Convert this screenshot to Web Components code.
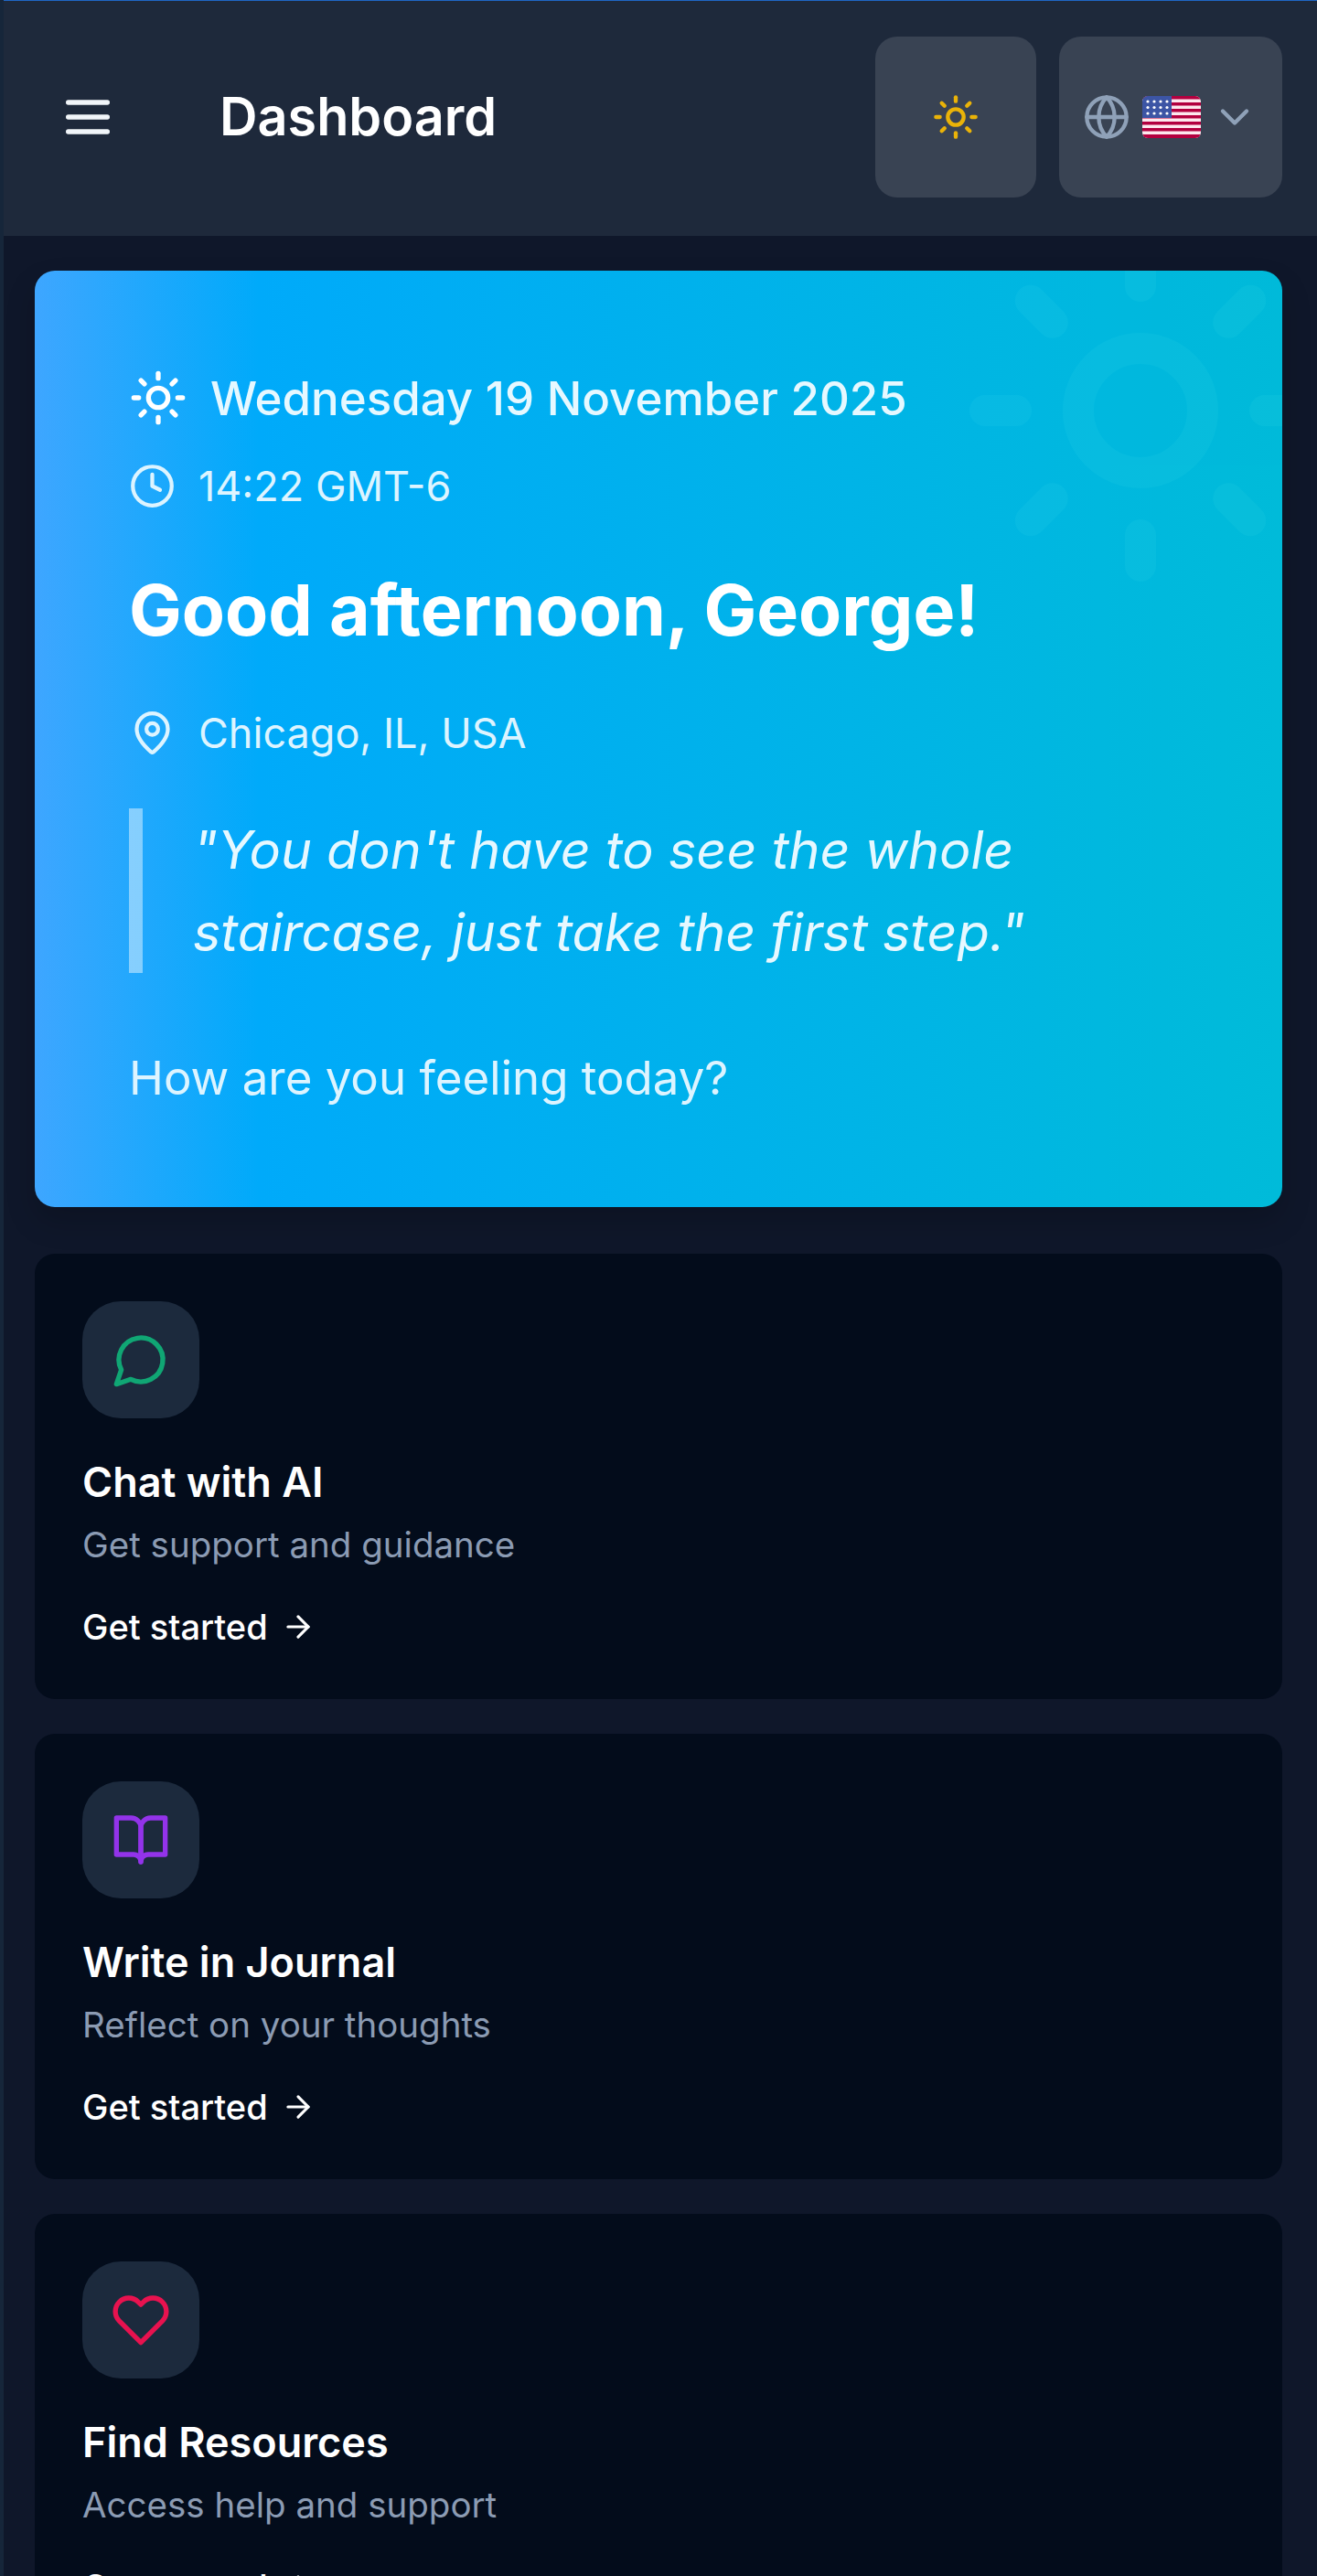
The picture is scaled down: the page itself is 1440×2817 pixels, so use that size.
<!DOCTYPE html>
<html lang="en">
<head>
<meta charset="utf-8">
<title>Dashboard</title>
<style>
  html, body { margin: 0; padding: 0; background: #0f172a; }
  body { font-family: Inter, "Liberation Sans", sans-serif; color: #fff; height: 2817px; overflow: hidden; }
</style>
</head>
<body>
<app-shell>
  <top-bar title="Dashboard"></top-bar>
  <hero-card></hero-card>
  <action-card heading="Chat with AI" text="Get support and guidance" icon="chat"></action-card>
  <action-card heading="Write in Journal" text="Reflect on your thoughts" icon="book"></action-card>
  <action-card heading="Find Resources" text="Access help and support" icon="heart"></action-card>
</app-shell>

<script>
// icons, all on a 24 box
const ICONS = {
  chat: '<path d="M7.9 20A9 9 0 1 0 4 16.1L2 22Z"/>',
  book: '<path d="M2 3h6a4 4 0 0 1 4 4v14a3 3 0 0 0-3-3H2z"/><path d="M22 3h-6a4 4 0 0 0-4 4v14a3 3 0 0 1 3-3h7z"/>',
  heart: '<path d="M20.84 4.61a5.5 5.5 0 0 0-7.78 0L12 5.67l-1.06-1.06a5.5 5.5 0 0 0-7.78 7.78l1.06 1.06L12 21.23l7.78-7.78 1.06-1.06a5.5 5.5 0 0 0 0-7.78z"/>',
  sun: '<circle cx="12" cy="12" r="4"/><path d="M12 2v2"/><path d="M12 20v2"/><path d="m4.93 4.93 1.41 1.41"/><path d="m17.66 17.66 1.41 1.41"/><path d="M2 12h2"/><path d="M20 12h2"/><path d="m6.34 17.66-1.41 1.41"/><path d="m19.07 4.93-1.41 1.41"/>',
  clock: '<circle cx="12" cy="12" r="10"/><path d="M12 6v6l4 2"/>',
  pin: '<path d="M20 10c0 4.99-5.54 10.19-7.4 11.8a1 1 0 0 1-1.2 0C9.54 20.19 4 14.99 4 10a8 8 0 0 1 16 0"/><circle cx="12" cy="10" r="3"/>',
  globe: '<circle cx="12" cy="12" r="10"/><path d="M12 2a14.5 14.5 0 0 0 0 20 14.5 14.5 0 0 0 0-20"/><path d="M2 12h20"/>',
  chevron: '<path d="m6 9 6 6 6-6"/>',
  arrow: '<path d="M5 12h14"/><path d="m12 5 7 7-7 7"/>',
  menu: '<path d="M4 6h16"/><path d="M4 12h16"/><path d="M4 18h16"/>'
};

function svg(name, size, color, sw) {
  return `<svg width="${size}" height="${size}" viewBox="0 0 24 24" fill="none" stroke="${color}" stroke-width="${sw || 2}" stroke-linecap="round" stroke-linejoin="round">${ICONS[name]}</svg>`;
}

class AppShell extends HTMLElement {
  constructor() {
    super();
    this.attachShadow({ mode: "open" }).innerHTML = `
      <style>
        :host { display: block; box-sizing: border-box; height: 2817px; overflow: hidden; border-left: 4px solid #16263a; }
        .body { display: flex; flex-direction: column; padding: 38px 38px 0 34px; }
      </style>
      <slot name="bar"></slot>
      <div class="body"><slot></slot></div>`;
  }
}

class TopBar extends HTMLElement {
  constructor() {
    super();
    this.slot = "bar";
    this.attachShadow({ mode: "open" }).innerHTML = `
      <style>
        :host { display: flex; align-items: center; box-sizing: border-box; height: 258px; background: #1e293b; border-top: 1px solid #1f66c4; padding: 0 38px 4px 60px; }
        .menu { display: flex; margin-right: 112px; }
        h1 { margin: 0; font-size: 57.5px; font-weight: 600; line-height: 1; flex: 1; }
        .btn { box-sizing: border-box; display: flex; align-items: center; height: 176px; background: #394353; border-radius: 24px; }
        .theme { width: 176px; justify-content: center; margin-right: 25px; }
        .lang { width: 244px; padding-left: 26px; }
        .flag { margin: 0 11px 0 13px; display: block; }
      </style>
      <div class="menu">${svg("menu", 64, "#f1f5f9", 2)}</div>
      <h1>${this.getAttribute("title")}</h1>
      <div class="btn theme">${svg("sun", 52, "#eab308", 2)}</div>
      <div class="btn lang">
        ${svg("globe", 52, "#8fa1b8", 2)}
        <svg class="flag" width="64" height="46" viewBox="0 0 64 46">
          <defs><clipPath id="f"><rect width="64" height="46" rx="6"/></clipPath></defs>
          <g clip-path="url(#f)">
            <rect width="64" height="46" fill="#fde8ee"/>
            <path fill="#b3003f" d="M0 0h64v3.5H0zM0 7h64v3.5H0zM0 14h64v3.5H0zM0 21h64v3.5H0zM0 28h64v3.5H0zM0 35h64v3.5H0zM0 42h64v4H0z"/>
            <rect width="32" height="24" fill="#3c55a5"/>
            <g fill="#fff">
              <circle cx="6" cy="6" r="1.6"/><circle cx="13" cy="6" r="1.6"/><circle cx="20" cy="6" r="1.6"/><circle cx="27" cy="6" r="1.6"/>
              <circle cx="6" cy="12.5" r="1.6"/><circle cx="13" cy="12.5" r="1.6"/><circle cx="20" cy="12.5" r="1.6"/><circle cx="27" cy="12.5" r="1.6"/>
              <circle cx="6" cy="19" r="1.6"/><circle cx="13" cy="19" r="1.6"/><circle cx="20" cy="19" r="1.6"/><circle cx="27" cy="19" r="1.6"/>
            </g>
          </g>
        </svg>
        ${svg("chevron", 52, "#8fa1b8", 2)}
      </div>`;
  }
}

class HeroCard extends HTMLElement {
  constructor() {
    super();
    this.attachShadow({ mode: "open" }).innerHTML = `
      <style>
        :host { display: block; position: relative; box-sizing: border-box; height: 1024px; margin-bottom: 51px; padding: 109px 104px 0 103px; border-radius: 22px; overflow: hidden; background: linear-gradient(90deg, #3ea6ff 0%, #00aafa 18%, #00bbd9 100%); box-shadow: 0 16px 32px rgba(0,0,0,.18); color: #e6f8ff; }
        .bg { position: absolute; right: -49px; top: -51px; opacity: .07; }
        .row { display: flex; align-items: center; position: relative; }
        .date { font-size: 51px; font-weight: 500; height: 60px; }
        .date svg { margin-right: 25px; }
        .time, .place { font-size: 45px; font-weight: 400; height: 56px; margin-top: 38px; color: #ddf4ff; }
        .time svg, .place svg { margin-right: 25px; }
        h2 { position: relative; margin: 60px 0 0; font-size: 77px; line-height: 96px; font-weight: 700; color: #fff; }
        .place { margin-top: 58px; }
        blockquote { position: relative; margin: 55px 0 0; padding: 0 0 0 55px; border-left: 15px solid rgba(255,255,255,.45); height: 180px; font-size: 57.5px; line-height: 90px; font-style: italic; color: #e6f8ff; font-weight: 400; box-sizing: border-box; }
        p { position: relative; margin: 85px 0 0; font-size: 51px; color: #ddf4ff; line-height: 60px; }
      </style>
      <svg class="bg" width="408" height="408" viewBox="0 0 24 24" fill="none" stroke="#60f0f0" stroke-width="2" stroke-linecap="round" stroke-linejoin="round">${ICONS.sun}</svg>
      <div class="row date">${svg("sun", 64, "#fff", 2)}<span>Wednesday 19 November 2025</span></div>
      <div class="row time">${svg("clock", 51, "#ddf4ff", 2)}<span>14:22 GMT-6</span></div>
      <h2>Good afternoon, George!</h2>
      <div class="row place">${svg("pin", 51, "#ddf4ff", 2)}<span>Chicago, IL, USA</span></div>
      <blockquote>"You don't have to see the whole staircase, just take the first step."</blockquote>
      <p>How are you feeling today?</p>`;
  }
}

const TINTS = { chat: "#10a674", book: "#9333ea", heart: "#e8124f" };

class ActionCard extends HTMLElement {
  connectedCallback() {
    if (this.shadowRoot) return;
    const icon = this.getAttribute("icon");
    this.attachShadow({ mode: "open" }).innerHTML = `
      <style>
        :host { display: block; box-sizing: border-box; height: 487px; margin-bottom: 38px; padding: 52px; background: #030c1b; border-radius: 22px; flex: none; }
        .tile { display: flex; align-items: center; justify-content: center; width: 128px; height: 128px; border-radius: 42px; background: #1c2a3d; }
        h3 { margin: 42px 0 0; font-size: 45px; line-height: 56px; font-weight: 600; color: #fff; }
        .sub { margin: 14px 0 0; font-size: 38.5px; line-height: 52px; color: #8b9bb3; }
        .go { display: flex; align-items: center; margin-top: 38px; font-size: 38px; line-height: 52px; font-weight: 500; color: #fff; }
        .go svg { margin-left: 14px; }
      </style>
      <div class="tile">${svg(icon, 64, TINTS[icon], 2)}</div>
      <h3>${this.getAttribute("heading")}</h3>
      <div class="sub">${this.getAttribute("text")}</div>
      <div class="go"><span>Get started</span>${svg("arrow", 38, "#fff", 2)}</div>`;
  }
}

customElements.define("app-shell", AppShell);
customElements.define("top-bar", TopBar);
customElements.define("hero-card", HeroCard);
customElements.define("action-card", ActionCard);
</script>
</body>
</html>
